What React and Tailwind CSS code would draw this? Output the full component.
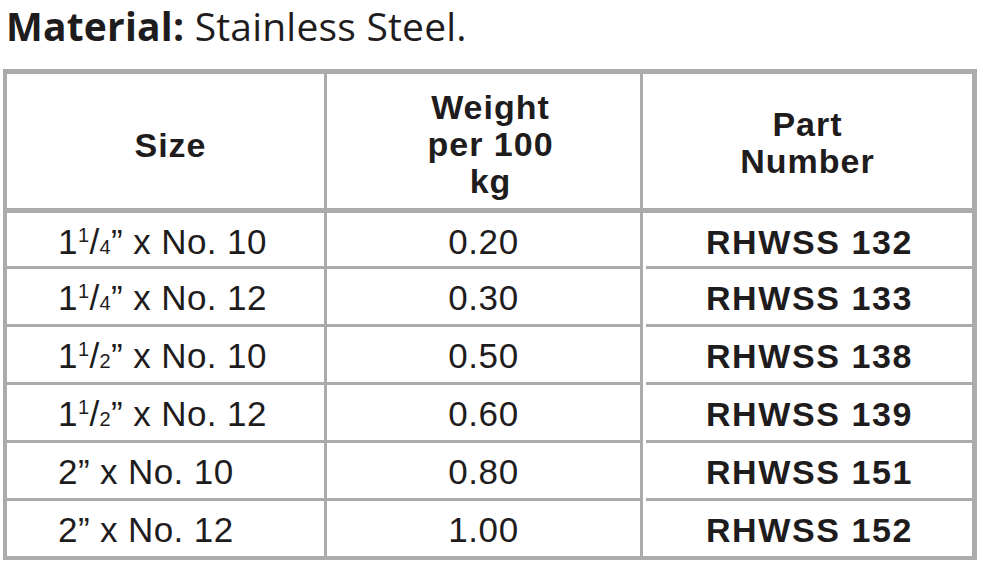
import React from "react";

const rows = [
  { whole: "1", num: "1", den: "4", rest: "” x No. 10", weight: "0.20", part: "RHWSS 132" },
  { whole: "1", num: "1", den: "4", rest: "” x No. 12", weight: "0.30", part: "RHWSS 133" },
  { whole: "1", num: "1", den: "2", rest: "” x No. 10", weight: "0.50", part: "RHWSS 138" },
  { whole: "1", num: "1", den: "2", rest: "” x No. 12", weight: "0.60", part: "RHWSS 139" },
  { whole: "2", rest: "” x No. 10", weight: "0.80", part: "RHWSS 151" },
  { whole: "2", rest: "” x No. 12", weight: "1.00", part: "RHWSS 152" },
];

function Size({ whole, num, den, rest }) {
  return (
    <span>
      {whole}
      {num && (
        <>
          <span className="relative top-[-12px] text-[20px]">{num}</span>
          <span>/</span>
          <span className="text-[20px]">{den}</span>
        </>
      )}
      {rest}
    </span>
  );
}

export default function App() {
  return (
    <div className="w-[983px] h-[567px] bg-white overflow-hidden text-[#1f1c1d]">
      {/* heading */}
      <h2 className="pl-[6px] pt-[1px] text-[39px] leading-[50px] font-['Open_Sans',sans-serif] tracking-[0.2px]">
        <span className="font-bold">Material:</span> Stainless Steel.
      </h2>

      {/* table */}
      <div className="ml-[3px] mt-[18px] w-[974px] border-[4px] border-t-[5px] border-r-[5px] border-[#ababab] font-['Liberation_Sans',Arial,sans-serif]">
        <div className="grid grid-cols-[317px_316px_1fr] h-[139px] border-b-[5px] border-[#ababab] font-bold text-[34px] leading-[37px] tracking-[1px] text-center">
          <div className="flex items-center justify-center pt-[8px] pl-[10px]">Size</div>
          <div className="flex items-center justify-center pt-[6px] pl-[14px] border-l-[3px] border-[#ababab]">
            Weight
            <br />
            per 100
            <br />
            kg
          </div>
          <div className="flex items-center justify-center pt-[4px] border-l-[3px] border-[#ababab]">
            Part
            <br />
            Number
          </div>
        </div>

        {rows.map((r, i) => (
          <div
            key={r.part}
            className={
              i === 0
                ? "grid grid-cols-[317px_316px_1fr] h-[53px]"
                : "grid grid-cols-[317px_316px_1fr] h-[58px]"
            }
          >
            <div className={i === 0 ? "flex items-center pl-[51px] pt-[3px] text-[35px] tracking-[0.4px]" : "flex items-center pl-[51px] pt-[3px] text-[35px] tracking-[0.4px] border-t-[3px] border-[#ababab]"}>
              <Size {...r} />
            </div>
            <div className={i === 0 ? "flex items-center justify-center pt-[3px] text-[35px] tracking-[0.6px] border-l-[3px] border-[#ababab]" : "flex items-center justify-center pt-[3px] text-[35px] tracking-[0.6px] border-l-[3px] border-t-[3px] border-[#ababab]"}>
              {r.weight}
            </div>
            <div className="flex flex-col border-l-[3px] border-[#ababab]">
              {i > 0 && <div className="ml-[3px] h-[3px] bg-[#ababab]" />}
              <div className="flex-1 flex items-center justify-center pt-[3px] pl-[4px] font-bold text-[34px] tracking-[1.6px]">
                {r.part}
              </div>
            </div>
          </div>
        ))}
      </div>
    </div>
  );
}
